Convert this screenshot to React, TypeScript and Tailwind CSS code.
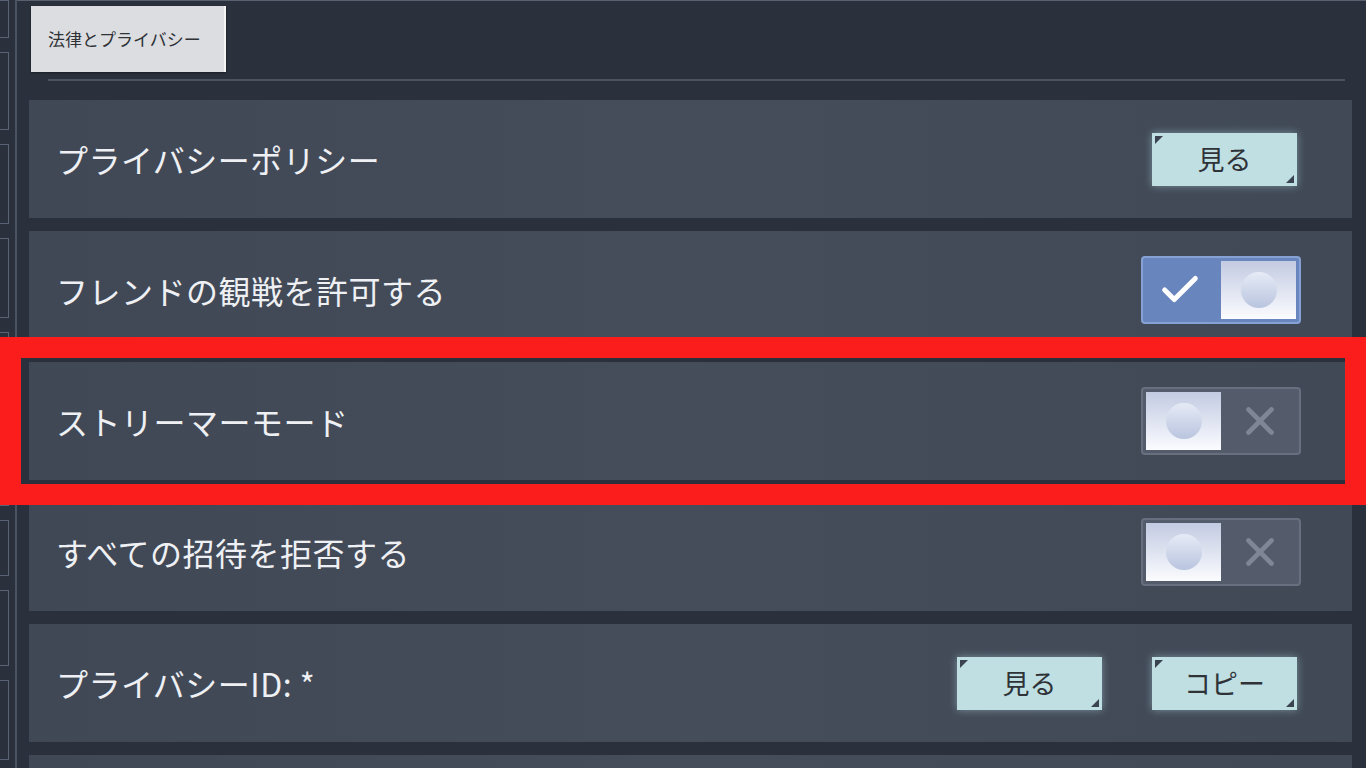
import { Check, X } from "lucide-react";

const font = { fontFamily: '"Noto Sans CJK JP", "Noto Sans", sans-serif' };

const Corner = () => (
  <>
    <span className="absolute left-[3px] top-[3px] h-0 w-0 border-r-[8px] border-t-[8px] border-r-transparent border-t-[#3b4250]" />
    <span className="absolute bottom-[3px] right-[3px] h-0 w-0 border-b-[8px] border-l-[8px] border-b-[#3b4250] border-l-transparent" />
  </>
);

const ActionButton = ({ label }: { label: string }) => (
  <button className="relative mr-[4px] flex h-[53px] w-[145px] items-center justify-center bg-[#bfdfe2] text-[27px] text-[#2f3338] shadow-[0_0_8px_rgba(190,235,240,0.45)]">
    <Corner />
    {label}
  </button>
);

const Knob = () => (
  <div className="flex h-[58px] w-[75px] items-center justify-center bg-gradient-to-b from-[#c3cbe2] to-[#fbfcff]">
    <div className="h-[36px] w-[36px] rounded-full bg-gradient-to-b from-[#e6ebf6] to-[#b9c4de]" />
  </div>
);

const Toggle = ({ on }: { on: boolean }) =>
  on ? (
    <div className="flex h-[68px] w-[160px] items-center justify-between rounded-[4px] border-2 border-[#86a1d4] bg-[#6985bd] pl-[14px] pr-[3px]">
      <Check className="h-[46px] w-[46px] text-white" strokeWidth={2.6} />
      <Knob />
    </div>
  ) : (
    <div className="flex h-[68px] w-[160px] items-center justify-between rounded-[4px] border-2 border-[#687080] bg-[#545c6b] pl-[3px] pr-[16px]">
      <Knob />
      <X className="h-[46px] w-[46px] text-[#7f8797]" strokeWidth={2.4} />
    </div>
  );

const Row = ({ label, children }: { label: string; children: React.ReactNode }) => (
  <div className="flex h-[118px] shrink-0 items-center justify-between bg-gradient-to-r from-[#404856] via-[#454c5a] to-[#414957] pl-[27px] pr-[51px]">
    <span className="text-[32px] tracking-[0.5px] text-[#eef0f3]">{label}</span>
    <div className="flex items-center gap-[46px]">{children}</div>
  </div>
);

export default function App() {
  return (
    <div style={font} className="relative flex h-[768px] w-[1366px] overflow-hidden bg-[#2a313d]">
      {/* left rail */}
      <div className="flex w-[11px] shrink-0 flex-col gap-[14px]">
        {[38, 78, 80, 80, 80, 80, 56, 76, 80].map((h, i) => (
          <div key={i} style={{ height: h }} className="w-[9px] shrink-0 border border-l-0 border-[#5a6374]" />
        ))}
      </div>
      <div className="ml-[4px] w-[2px] shrink-0 bg-[#4a5362]" />

      {/* main panel */}
      <div className="flex flex-1 flex-col overflow-hidden border-t border-[#596170] pl-[12px] pr-[14px]">
        <div className="flex h-[78px] shrink-0 items-start pt-[5px]">
          <div className="ml-[2px] flex h-[66px] w-[195px] items-center border-r-2 border-[#f4f4f4] bg-[#dcdde0] pl-[17px] text-[17px] text-[#2e3136] shadow-[0_1px_2px_rgba(0,0,0,0.4)]">
            法律とプライバシー
          </div>
        </div>
        <div className="ml-[19px] mr-[7px] h-[2px] shrink-0 bg-[#4b5361]" />
        <div className="mt-[19px] flex shrink-0 flex-col gap-[13px]">
          <Row label="プライバシーポリシー">
            <ActionButton label="見る" />
          </Row>
          <Row label="フレンドの観戦を許可する">
            <Toggle on />
          </Row>
          <Row label="ストリーマーモード">
            <Toggle on={false} />
          </Row>
          <Row label="すべての招待を拒否する">
            <Toggle on={false} />
          </Row>
          <Row label="プライバシーID: *">
            <ActionButton label="見る" />
            <ActionButton label="コピー" />
          </Row>
          <Row label="">
            <span />
          </Row>
        </div>
      </div>

      {/* highlight annotation */}
      <div className="pointer-events-none absolute left-0 top-[337px] h-[168px] w-[1366px] border-[21px] border-[#fb1c1c]" />
    </div>
  );
}
